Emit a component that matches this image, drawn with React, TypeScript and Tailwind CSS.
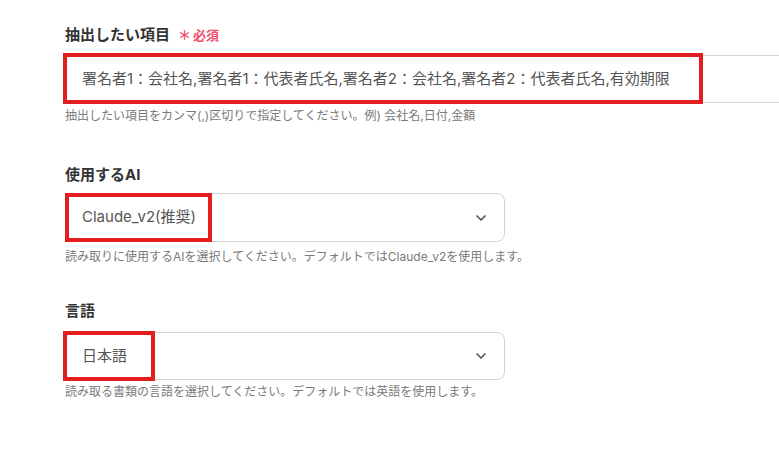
import React from "react";

function Chevron() {
  return (
    <svg width="16" height="16" viewBox="0 0 24 24" fill="none" stroke="#4b5563" strokeWidth="2.5" strokeLinecap="round" strokeLinejoin="round">
      <path d="M6 9l6 6 6-6" />
    </svg>
  );
}

export default function App() {
  return (
    <div
      className="min-h-screen w-full overflow-hidden bg-white pl-[65px] pt-[25px]"
      style={{ fontFamily: 'Inter, "Noto Sans CJK JP", sans-serif' }}
    >
      {/* 抽出したい項目 */}
      <div className="flex items-center text-[15px] font-bold leading-5 text-[#333]">
        抽出したい項目
        <span className="ml-[8px] text-[13px] font-bold text-[#f0506e]">＊</span>
        <span className="ml-[2px] text-[13px] font-bold text-[#f0506e]">必須</span>
      </div>
      <div className="relative mt-[10px] w-[760px]">
        <div className="flex h-[48px] items-center rounded-lg border border-[#d4d4d8] px-4 text-[15px] text-[#555]">
          署名者1：会社名,署名者1：代表者氏名,署名者2：会社名,署名者2：代表者氏名,有効期限
        </div>
        <div className="absolute -left-[2px] -top-[2px] h-[51px] w-[640px] border-4 border-[#e41e1e]" />
      </div>
      <p className="mt-[5px] text-[12px] leading-4 text-[#7a7a7a]">
        抽出したい項目をカンマ(,)区切りで指定してください。例) 会社名,日付,金額
      </p>

      {/* 使用するAI */}
      <div className="mt-[41px] text-[15px] font-bold leading-5 text-[#333]">使用するAI</div>
      <div className="relative mt-[8px] w-[440px]">
        <div className="flex h-[49px] items-center justify-between rounded-lg border border-[#d4d4d8] pl-4 pr-[15px] text-[15px] text-[#555]">
          <span>Claude_v2(推奨)</span>
          <Chevron />
        </div>
        <div className="absolute left-0 top-0 h-[49px] w-[147px] border-4 border-[#e41e1e]" />
      </div>
      <p className="mt-[7px] text-[12px] leading-4 text-[#7a7a7a]">
        読み取りに使用するAIを選択してください。デフォルトではClaude_v2を使用します。
      </p>

      {/* 言語 */}
      <div className="mt-[36px] text-[15px] font-bold leading-5 text-[#333]">言語</div>
      <div className="relative mt-[11px] w-[440px]">
        <div className="flex h-[48px] items-center justify-between rounded-lg border border-[#d4d4d8] pl-4 pr-[15px] text-[15px] text-[#555]">
          <span>日本語</span>
          <Chevron />
        </div>
        <div className="absolute -left-[2px] -top-[1px] h-[50px] w-[92px] border-4 border-[#e41e1e]" />
      </div>
      <p className="mt-[4px] text-[12px] leading-4 text-[#7a7a7a]">
        読み取る書類の言語を選択してください。デフォルトでは英語を使用します。
      </p>
    </div>
  );
}
